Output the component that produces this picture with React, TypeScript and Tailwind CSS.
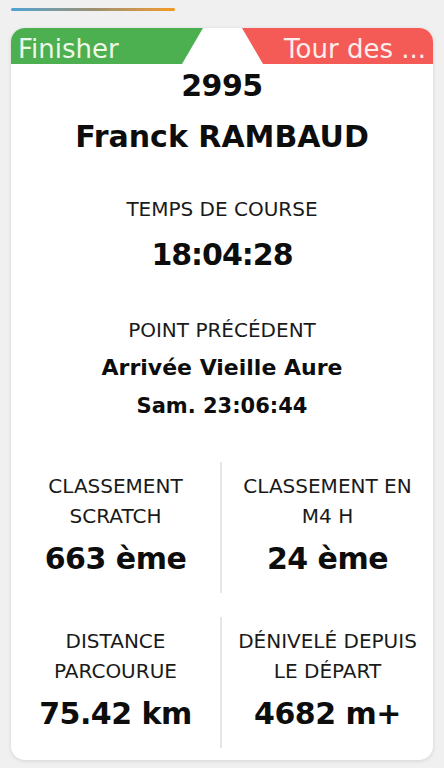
const stats = [
  [
    { label: ["CLASSEMENT", "SCRATCH"], value: "663 ème" },
    { label: ["CLASSEMENT EN", "M4 H"], value: "24 ème" },
  ],
  [
    { label: ["DISTANCE", "PARCOURUE"], value: "75.42 km" },
    { label: ["DÉNIVELÉ DEPUIS", "LE DÉPART"], value: "4682 m+" },
  ],
];

function StatCell({ label, value, divider }: { label: string[]; value: string; divider?: boolean }) {
  return (
    <div className={`flex flex-col items-center pt-[9px] pb-[14px] ${divider ? "border-r-2 border-[#e6e6e6]" : ""}`}>
      {label.map((l) => (
        <p key={l} className="text-[20px] leading-[30px] text-[#1a1a1a]">
          {l}
        </p>
      ))}
      <p className="mt-[8px] text-[30px] leading-[40px] font-bold tracking-[-0.5px] text-[#0d0d0d]">{value}</p>
    </div>
  );
}

export default function App() {
  return (
    <div
      className="min-h-[768px] w-[444px] bg-[#f0f0f0] px-[11px] pt-[8px] pb-[8px]"
      style={{ fontFamily: '"DejaVu Sans", "Liberation Sans", sans-serif' }}
    >
      {/* progress bar */}
      <div className="h-[3px] w-[164px] rounded-full bg-gradient-to-r from-[#4aa2d4] via-[#9a9070] to-[#f39a16]" />

      {/* card */}
      <div className="mt-[17px] overflow-hidden rounded-[14px] bg-white shadow-[0_1px_4px_rgba(0,0,0,0.12)]">
        {/* header band */}
        <div className="flex h-[36px] justify-between overflow-hidden">
          <div className="w-[192px] bg-[#4caf50] pl-[7px] text-[26px] leading-[42px] text-[#eef8e8] [clip-path:polygon(0_0,100%_0,calc(100%_-_21px)_100%,0_100%)]">
            Finisher
          </div>
          <div className="w-[191px] bg-[#f45b56] pr-[7px] text-right text-[26px] leading-[42px] text-[#fdeeee] [clip-path:polygon(0_0,100%_0,100%_100%,21px_100%)]">
            Tour des ...
          </div>
        </div>

        {/* identity */}
        <div className="flex flex-col items-center text-[#0d0d0d]">
          <p className="mt-[4px] text-[30px] leading-[36px] font-bold tracking-[-0.5px]">2995</p>
          <p className="mt-[13px] text-[30px] leading-[40px] font-bold">Franck RAMBAUD</p>

          <p className="mt-[37px] text-[20px] leading-[30px] text-[#1a1a1a]">TEMPS DE COURSE</p>
          <p className="mt-[11px] text-[30px] leading-[40px] font-bold tracking-[-1px]">18:04:28</p>

          <p className="mt-[40px] text-[20px] leading-[30px] text-[#1a1a1a]">POINT PRÉCÉDENT</p>
          <p className="mt-[5px] text-[22px] leading-[36px] font-bold">Arrivée Vieille Aure</p>
          <p className="mt-[2px] text-[21px] leading-[36px] font-bold">Sam. 23:06:44</p>
        </div>

        {/* stats */}
        <div className="mt-[38px] flex flex-col gap-[24px] pb-[12px]">
          {stats.map((row, i) => (
            <div key={i} className="grid grid-cols-2">
              <StatCell label={row[0].label} value={row[0].value} divider />
              <StatCell label={row[1].label} value={row[1].value} />
            </div>
          ))}
        </div>
      </div>
    </div>
  );
}
